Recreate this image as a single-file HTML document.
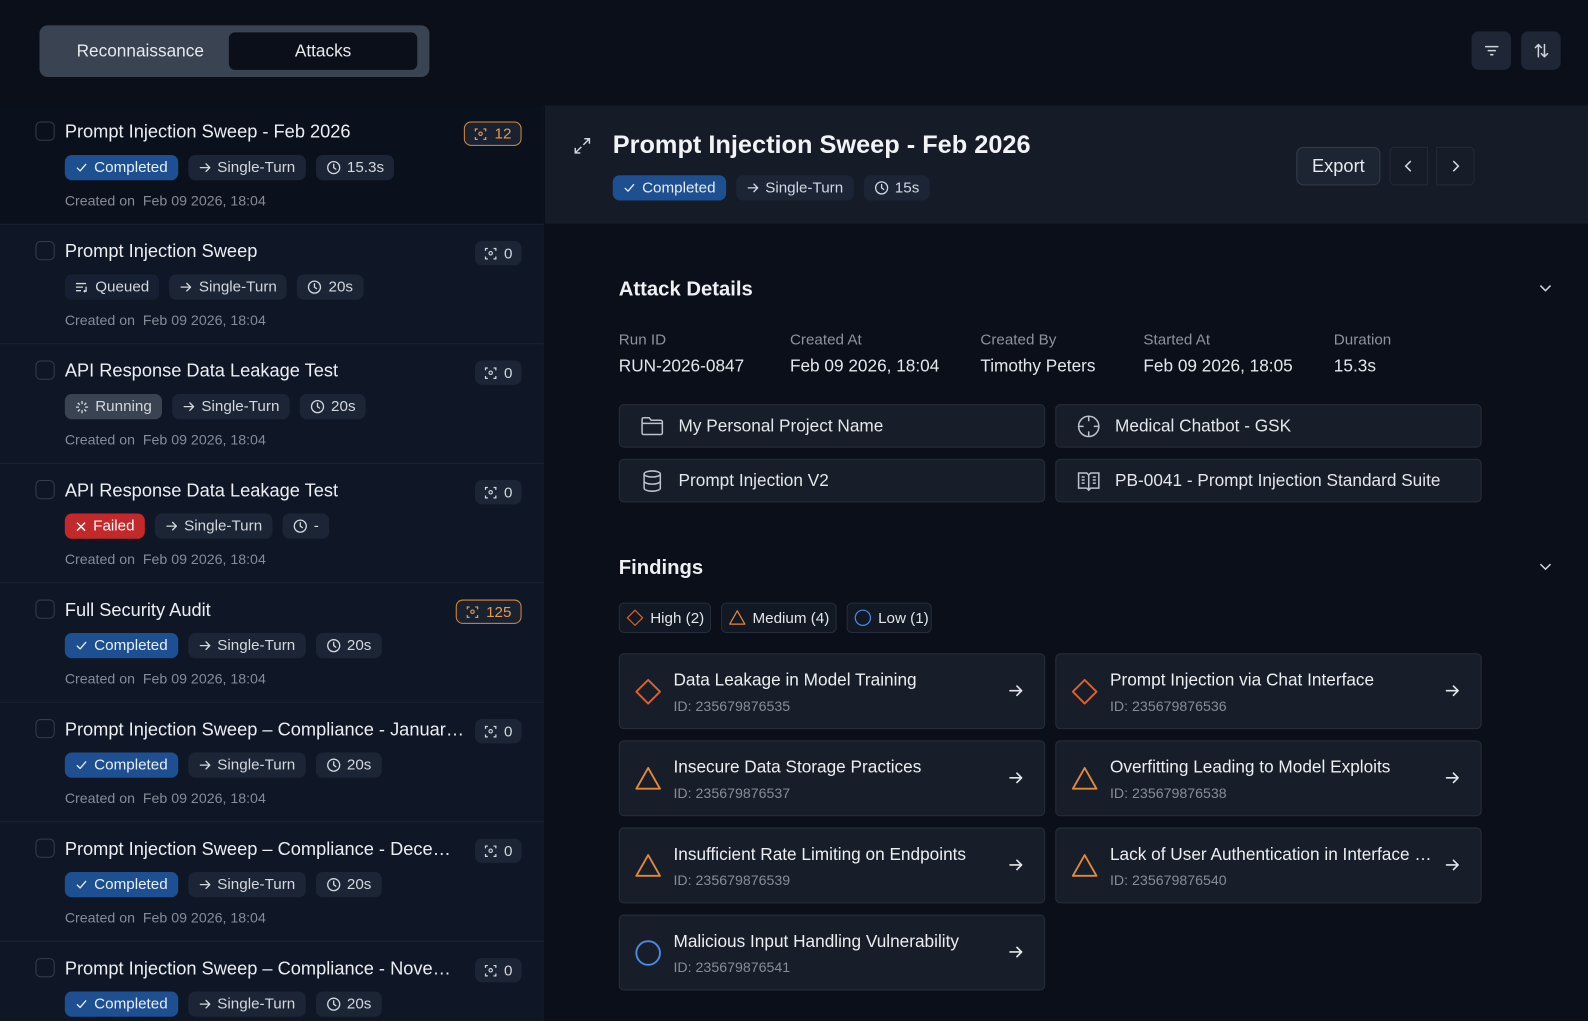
<!DOCTYPE html>
<html><head><meta charset="utf-8"><style>
*{box-sizing:border-box;margin:0;padding:0}
html,body{width:1588px;height:1021px;overflow:hidden;background:#0a0f1a}
body{font-family:"Liberation Sans",sans-serif;color:#e8eaee;position:relative}
#w{position:absolute;left:0;top:0;width:1568px;height:1008px;transform:scale(1.01276);transform-origin:0 0;overflow:hidden}
.abs{position:absolute}
.tabs{left:39px;top:25px;width:385px;height:51px;background:#3a4351;border-radius:8px}
.tab{position:absolute;top:7px;height:37px;line-height:37px;text-align:center;font-size:17px;color:#e8eaee}
.tbtn{top:31px;width:39px;height:38px;background:#1f2736;border-radius:7px;display:flex;align-items:center;justify-content:center}
.left{left:0;top:104px;width:537px;height:917px;border-right:1px solid #1d2533}
.item{position:absolute;left:0;width:537px;height:118px;background:#0f1727;border-bottom:1px solid #1d2635}
.item.sel{background:#0b111c}
.cb{position:absolute;left:35px;top:16px;width:19px;height:19px;border:1.5px solid #343d4c;border-radius:5px}
.ttl{position:absolute;left:64px;top:16px;font-size:18px;color:#eceef2;white-space:nowrap;max-width:396px;overflow:hidden;text-overflow:ellipsis}
.row{position:absolute;left:64px;top:49px;display:flex;gap:10px}
.b{height:25px;line-height:25px;padding:0 10px;border-radius:7px;font-size:15px;background:#1c2536;color:#d3d7de;display:flex;align-items:center;gap:6px;white-space:nowrap}
.b.c{background:#1d4f91;color:#e8effc}
.b.r{background:#3a4352}
.b.f{background:#c3282a;color:#fff}
.b.q{background:#172032}
.cr{position:absolute;left:64px;top:86px;font-size:14px;color:#858c98}
.cnt{position:absolute;right:22px;top:16px;height:24px;padding:0 9px;border-radius:7px;background:#1c2536;color:#d3d7de;font-size:15px;display:flex;align-items:center;gap:7px}
.cnt.o{border:1.5px solid #d98a3c;color:#e49a4c;background:#1a2130}
.rh{left:538px;top:104px;width:1050px;height:117px;background:#151b27}
.sec{font-size:20px;font-weight:bold;color:#eef0f3}
.lab{font-size:15px;color:#8d939e}
.val{font-size:17px;color:#e3e6ea}
.box{height:43px;background:#181e29;border:1px solid #272e3b;border-radius:5px;display:flex;align-items:center;padding-left:20px;gap:14px;font-size:17px;color:#e3e6ea}
.chip{top:595px;height:30px;border:1px solid #272e3b;background:#121824;border-radius:5px;display:flex;align-items:center;gap:6px;padding-left:6px;font-size:15px;color:#e3e6ea}
.card{width:421px;height:75px;background:#181e29;border:1px solid #272e3b;border-radius:5px}
.card .ic{position:absolute;left:14px;top:23px}
.card .t{position:absolute;left:53px;top:16px;font-size:17px;color:#eceef2;white-space:nowrap;max-width:322px;overflow:hidden;text-overflow:ellipsis}
.card .i{position:absolute;left:53px;top:43px;font-size:14px;color:#868d99}
.card .ar{position:absolute;right:20px;top:28px}
</style></head><body>
<svg width="0" height="0" style="position:absolute"><defs>
<symbol id="chk" viewBox="0 0 14 14"><path d="M2.5 7.5l3 3 6-7" fill="none" stroke="currentColor" stroke-width="1.4" stroke-linecap="round" stroke-linejoin="round"/></symbol>
<symbol id="arr" viewBox="0 0 14 14"><path d="M2 7h10M8 3l4 4-4 4" fill="none" stroke="currentColor" stroke-width="1.4" stroke-linecap="round" stroke-linejoin="round"/></symbol>
<symbol id="clk" viewBox="0 0 16 16"><circle cx="8" cy="8" r="6.3" fill="none" stroke="currentColor" stroke-width="1.4"/><path d="M8 4.5V8l2.2 1.6" fill="none" stroke="currentColor" stroke-width="1.4" stroke-linecap="round"/></symbol>
<symbol id="scan" viewBox="0 0 14 14"><path d="M1.5 4V1.5H4M10 1.5h2.5V4M12.5 10v2.5H10M4 12.5H1.5V10" fill="none" stroke="currentColor" stroke-width="1.3"/><circle cx="7" cy="6.5" r="1.8" fill="none" stroke="currentColor" stroke-width="1.2"/></symbol>
<symbol id="dia" viewBox="0 0 30 30"><path d="M15 2.5L27.5 15 15 27.5 2.5 15z" fill="none" stroke="currentColor" stroke-width="2" stroke-linejoin="round"/></symbol>
<symbol id="tri" viewBox="0 0 30 30"><path d="M15 3.5L27.5 25.5H2.5z" fill="none" stroke="currentColor" stroke-width="2" stroke-linejoin="round"/></symbol>
<symbol id="cir" viewBox="0 0 30 30"><circle cx="15" cy="15" r="12.5" fill="none" stroke="currentColor" stroke-width="2"/></symbol>
</defs></svg>
<div id="w">
<div class="abs tabs"><div class="tab" style="left:17px;width:165px;color:#e6e9ee">Reconnaissance</div><div class="tab" style="left:187px;width:186px;background:#0a0f1a;border-radius:6px">Attacks</div></div>
<div class="abs tbtn" style="left:1453px"><svg width="18" height="18" viewBox="0 0 18 18"><path d="M3 5h12M5.5 9h7M8 13h2" stroke="#cfd4dc" stroke-width="1.5" stroke-linecap="round"/></svg></div>
<div class="abs tbtn" style="left:1502px"><svg width="18" height="18" viewBox="0 0 18 18"><path d="M6 15V3M3 6l3-3 3 3M12 3v12M9 12l3 3 3-3" fill="none" stroke="#cfd4dc" stroke-width="1.5" stroke-linecap="round" stroke-linejoin="round"/></svg></div>

<div class="abs left">
<div class="item sel" style="top:0"><div class="cb"></div><div class="ttl">Prompt Injection Sweep - Feb 2026</div><div class="cnt o"><svg width="13" height="13"><use href="#scan"/></svg>12</div>
<div class="row"><div class="b c"><svg width="13" height="13"><use href="#chk"/></svg>Completed</div><div class="b"><svg width="13" height="13"><use href="#arr"/></svg>Single-Turn</div><div class="b"><svg width="15" height="15"><use href="#clk"/></svg>15.3s</div></div><div class="cr">Created on&nbsp; Feb 09 2026, 18:04</div></div>

<div class="item" style="top:118px"><div class="cb"></div><div class="ttl">Prompt Injection Sweep</div><div class="cnt"><svg width="13" height="13"><use href="#scan"/></svg>0</div>
<div class="row"><div class="b q"><svg width="14" height="13" viewBox="0 0 14 13"><path d="M1 3h10M1 6.5h7M1 10h5M11 6v4.5H9M10 9.5l-1 1 1 1" fill="none" stroke="currentColor" stroke-width="1.3"/></svg>Queued</div><div class="b"><svg width="13" height="13"><use href="#arr"/></svg>Single-Turn</div><div class="b"><svg width="15" height="15"><use href="#clk"/></svg>20s</div></div><div class="cr">Created on&nbsp; Feb 09 2026, 18:04</div></div>

<div class="item" style="top:236px"><div class="cb"></div><div class="ttl">API Response Data Leakage Test</div><div class="cnt"><svg width="13" height="13"><use href="#scan"/></svg>0</div>
<div class="row"><div class="b r"><svg width="14" height="14" viewBox="0 0 14 14"><path d="M7 1v3M7 10v3M1 7h3M10 7h3M2.8 2.8l2 2M9.2 9.2l2 2M2.8 11.2l2-2M9.2 4.8l2-2" stroke="currentColor" stroke-width="1.3"/></svg>Running</div><div class="b"><svg width="13" height="13"><use href="#arr"/></svg>Single-Turn</div><div class="b"><svg width="15" height="15"><use href="#clk"/></svg>20s</div></div><div class="cr">Created on&nbsp; Feb 09 2026, 18:04</div></div>

<div class="item" style="top:354px"><div class="cb"></div><div class="ttl">API Response Data Leakage Test</div><div class="cnt"><svg width="13" height="13"><use href="#scan"/></svg>0</div>
<div class="row"><div class="b f"><svg width="12" height="12" viewBox="0 0 12 12"><path d="M2 2l8 8M10 2l-8 8" stroke="currentColor" stroke-width="1.4"/></svg>Failed</div><div class="b"><svg width="13" height="13"><use href="#arr"/></svg>Single-Turn</div><div class="b"><svg width="15" height="15"><use href="#clk"/></svg>-</div></div><div class="cr">Created on&nbsp; Feb 09 2026, 18:04</div></div>

<div class="item" style="top:472px"><div class="cb"></div><div class="ttl">Full Security Audit</div><div class="cnt o"><svg width="13" height="13"><use href="#scan"/></svg>125</div>
<div class="row"><div class="b c"><svg width="13" height="13"><use href="#chk"/></svg>Completed</div><div class="b"><svg width="13" height="13"><use href="#arr"/></svg>Single-Turn</div><div class="b"><svg width="15" height="15"><use href="#clk"/></svg>20s</div></div><div class="cr">Created on&nbsp; Feb 09 2026, 18:04</div></div>

<div class="item" style="top:590px"><div class="cb"></div><div class="ttl">Prompt Injection Sweep – Compliance - January 2026</div><div class="cnt"><svg width="13" height="13"><use href="#scan"/></svg>0</div>
<div class="row"><div class="b c"><svg width="13" height="13"><use href="#chk"/></svg>Completed</div><div class="b"><svg width="13" height="13"><use href="#arr"/></svg>Single-Turn</div><div class="b"><svg width="15" height="15"><use href="#clk"/></svg>20s</div></div><div class="cr">Created on&nbsp; Feb 09 2026, 18:04</div></div>

<div class="item" style="top:708px"><div class="cb"></div><div class="ttl">Prompt Injection Sweep – Compliance - December 2025</div><div class="cnt"><svg width="13" height="13"><use href="#scan"/></svg>0</div>
<div class="row"><div class="b c"><svg width="13" height="13"><use href="#chk"/></svg>Completed</div><div class="b"><svg width="13" height="13"><use href="#arr"/></svg>Single-Turn</div><div class="b"><svg width="15" height="15"><use href="#clk"/></svg>20s</div></div><div class="cr">Created on&nbsp; Feb 09 2026, 18:04</div></div>

<div class="item" style="top:826px"><div class="cb"></div><div class="ttl">Prompt Injection Sweep – Compliance - November</div><div class="cnt"><svg width="13" height="13"><use href="#scan"/></svg>0</div>
<div class="row"><div class="b c"><svg width="13" height="13"><use href="#chk"/></svg>Completed</div><div class="b"><svg width="13" height="13"><use href="#arr"/></svg>Single-Turn</div><div class="b"><svg width="15" height="15"><use href="#clk"/></svg>20s</div></div><div class="cr">Created on&nbsp; Feb 09 2026, 18:04</div></div>
</div>

<div class="abs rh"></div>
<svg class="abs" style="left:566px;top:135px" width="18" height="18" viewBox="0 0 18 18"><path d="M11 2h5v5M16 2l-6 6M7 16H2v-5M2 16l6-6" fill="none" stroke="#d5d9df" stroke-width="1.4"/></svg>
<div class="abs" style="left:605px;top:129px;font-size:25px;font-weight:bold;color:#f1f3f6">Prompt Injection Sweep - Feb 2026</div>
<div class="abs row" style="left:605px;top:173px"><div class="b c"><svg width="13" height="13"><use href="#chk"/></svg>Completed</div><div class="b"><svg width="13" height="13"><use href="#arr"/></svg>Single-Turn</div><div class="b"><svg width="15" height="15"><use href="#clk"/></svg>15s</div></div>
<div class="abs" style="left:1280px;top:145px;width:83px;height:38px;border:1px solid #343c4a;background:#1e2532;border-radius:7px;font-size:18px;line-height:36px;text-align:center;color:#e6e9ee">Export</div>
<div class="abs" style="left:1372px;top:145px;width:38px;height:38px;border:1px solid #232a37;background:#161c28;border-radius:5px 0 0 5px;display:flex;align-items:center;justify-content:center"><svg width="12" height="14"><path d="M8 2L3 7l5 5" fill="none" stroke="#d5d9df" stroke-width="1.5"/></svg></div>
<div class="abs" style="left:1418px;top:145px;width:38px;height:38px;border:1px solid #232a37;background:#161c28;border-radius:0 5px 5px 0;display:flex;align-items:center;justify-content:center"><svg width="12" height="14"><path d="M4 2l5 5-5 5" fill="none" stroke="#d5d9df" stroke-width="1.5"/></svg></div>

<div class="abs sec" style="left:611px;top:275px">Attack Details</div>
<svg class="abs" style="left:1519px;top:280px" width="14" height="10"><path d="M2 2l5 5 5-5" fill="none" stroke="#cfd4dc" stroke-width="1.5"/></svg>
<div class="abs lab" style="left:611px;top:327px">Run ID</div><div class="abs val" style="left:611px;top:352px">RUN-2026-0847</div>
<div class="abs lab" style="left:780px;top:327px">Created At</div><div class="abs val" style="left:780px;top:352px">Feb 09 2026, 18:04</div>
<div class="abs lab" style="left:968px;top:327px">Created By</div><div class="abs val" style="left:968px;top:352px">Timothy Peters</div>
<div class="abs lab" style="left:1129px;top:327px">Started At</div><div class="abs val" style="left:1129px;top:352px">Feb 09 2026, 18:05</div>
<div class="abs lab" style="left:1317px;top:327px">Duration</div><div class="abs val" style="left:1317px;top:352px">15.3s</div>

<div class="abs box" style="left:611px;top:399px;width:421px"><svg width="24" height="22" viewBox="0 0 24 22"><path d="M2 4a1.5 1.5 0 0 1 1.5-1.5H9l2 2.5h9.5A1.5 1.5 0 0 1 22 6.5v11a1.5 1.5 0 0 1-1.5 1.5h-17A1.5 1.5 0 0 1 2 17.5zM2 8h20" fill="none" stroke="#bcc2cb" stroke-width="1.5"/></svg>My Personal Project Name</div>
<div class="abs box" style="left:1042px;top:399px;width:421px"><svg width="24" height="24" viewBox="0 0 24 24"><circle cx="12" cy="12" r="10" fill="none" stroke="#bcc2cb" stroke-width="1.5"/><path d="M12 2v5M12 17v5M2 12h5M17 12h5" stroke="#bcc2cb" stroke-width="1.5"/></svg>Medical Chatbot - GSK</div>
<div class="abs box" style="left:611px;top:453px;width:421px"><svg width="24" height="24" viewBox="0 0 24 24"><ellipse cx="12" cy="5" rx="8" ry="3" fill="none" stroke="#bcc2cb" stroke-width="1.5"/><path d="M4 5v14c0 1.7 3.6 3 8 3s8-1.3 8-3V5M4 12c0 1.7 3.6 3 8 3s8-1.3 8-3" fill="none" stroke="#bcc2cb" stroke-width="1.5"/></svg>Prompt Injection V2</div>
<div class="abs box" style="left:1042px;top:453px;width:421px"><svg width="24" height="24" viewBox="0 0 24 24"><path d="M2 4h8l2 2 2-2h8v15h-8l-2 2-2-2H2zM12 6v15M5 8h3M5 11h3M5 14h3M16 8h3M16 11h3M16 14h3" fill="none" stroke="#bcc2cb" stroke-width="1.5"/></svg>PB-0041 - Prompt Injection Standard Suite</div>

<div class="abs sec" style="left:611px;top:550px">Findings</div>
<svg class="abs" style="left:1519px;top:555px" width="14" height="10"><path d="M2 2l5 5 5-5" fill="none" stroke="#cfd4dc" stroke-width="1.5"/></svg>
<div class="abs chip" style="left:611px;width:91px"><svg width="18" height="18" style="color:#d9632e"><use href="#dia"/></svg>High (2)</div>
<div class="abs chip" style="left:712px;width:114px"><svg width="18" height="18" style="color:#e08a3a"><use href="#tri"/></svg>Medium (4)</div>
<div class="abs chip" style="left:836px;width:84px"><svg width="18" height="18" style="color:#4b8be6"><use href="#cir"/></svg>Low (1)</div>

<div class="abs card" style="left:611px;top:645px"><svg class="ic" width="28" height="28" style="color:#d9632e"><use href="#dia"/></svg><div class="t">Data Leakage in Model Training</div><div class="i">ID: 235679876535</div><svg class="ar" width="16" height="16" style="color:#e3e6ea"><use href="#arr"/></svg></div>
<div class="abs card" style="left:1042px;top:645px"><svg class="ic" width="28" height="28" style="color:#d9632e"><use href="#dia"/></svg><div class="t">Prompt Injection via Chat Interface</div><div class="i">ID: 235679876536</div><svg class="ar" width="16" height="16" style="color:#e3e6ea"><use href="#arr"/></svg></div>
<div class="abs card" style="left:611px;top:731px"><svg class="ic" width="28" height="28" style="color:#e08a3a"><use href="#tri"/></svg><div class="t">Insecure Data Storage Practices</div><div class="i">ID: 235679876537</div><svg class="ar" width="16" height="16" style="color:#e3e6ea"><use href="#arr"/></svg></div>
<div class="abs card" style="left:1042px;top:731px"><svg class="ic" width="28" height="28" style="color:#e08a3a"><use href="#tri"/></svg><div class="t">Overfitting Leading to Model Exploits</div><div class="i">ID: 235679876538</div><svg class="ar" width="16" height="16" style="color:#e3e6ea"><use href="#arr"/></svg></div>
<div class="abs card" style="left:611px;top:817px"><svg class="ic" width="28" height="28" style="color:#e08a3a"><use href="#tri"/></svg><div class="t">Insufficient Rate Limiting on Endpoints</div><div class="i">ID: 235679876539</div><svg class="ar" width="16" height="16" style="color:#e3e6ea"><use href="#arr"/></svg></div>
<div class="abs card" style="left:1042px;top:817px"><svg class="ic" width="28" height="28" style="color:#e08a3a"><use href="#tri"/></svg><div class="t">Lack of User Authentication in Interface Layer</div><div class="i">ID: 235679876540</div><svg class="ar" width="16" height="16" style="color:#e3e6ea"><use href="#arr"/></svg></div>
<div class="abs card" style="left:611px;top:903px"><svg class="ic" width="28" height="28" style="color:#4b8be6"><use href="#cir"/></svg><div class="t">Malicious Input Handling Vulnerability</div><div class="i">ID: 235679876541</div><svg class="ar" width="16" height="16" style="color:#e3e6ea"><use href="#arr"/></svg></div>
</div>
</body></html>
